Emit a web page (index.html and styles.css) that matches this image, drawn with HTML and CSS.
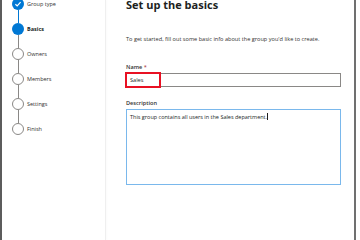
FILE: index.html
```html
<!DOCTYPE html>
<html>
<head>
<meta charset="utf-8">
<link rel="stylesheet" href="styles.css">
</head>
<body>
<div class="frame">
  <aside class="sidebar">
    <div class="steps">
      <div class="step">
        <span class="dot done"><svg width="12" height="12" viewBox="0 0 12 12"><circle cx="6" cy="6" r="6" fill="#0078d4"/><path d="M3.4 6.2 L5.2 7.9 L8.6 4.2" fill="none" stroke="#fff" stroke-width="1.2"/></svg></span>
        <span class="label">Group type</span>
      </div>
      <div class="conn blue"></div>
      <div class="step">
        <span class="dot current"></span>
        <span class="label bold">Basics</span>
      </div>
      <div class="conn"></div>
      <div class="step">
        <span class="dot"></span>
        <span class="label">Owners</span>
      </div>
      <div class="conn"></div>
      <div class="step">
        <span class="dot"></span>
        <span class="label">Members</span>
      </div>
      <div class="conn"></div>
      <div class="step">
        <span class="dot"></span>
        <span class="label">Settings</span>
      </div>
      <div class="conn"></div>
      <div class="step">
        <span class="dot"></span>
        <span class="label">Finish</span>
      </div>
    </div>
  </aside>
  <main class="content">
    <h1 class="title">Set up the basics</h1>
    <p class="intro">To get started, fill out some basic info about the group you'd like to create.</p>
    <div class="field">
      <div class="flabel">Name <span class="req">*</span></div>
      <div class="input-wrap">
        <div class="input">Sales</div>
        <div class="highlight"></div>
      </div>
    </div>
    <div class="field">
      <div class="flabel">Description</div>
      <div class="textarea">This group contains all users in the Sales department.<span class="caret"></span></div>
    </div>
  </main>
</div>
</body>
</html>
```
FILE: styles.css
```css
html, body {
  margin: 0;
  padding: 0;
  background: #fff;
  width: 360px;
  height: 240px;
  overflow: hidden;
}
body {
  font-family: "Open Sans", "Noto Sans", sans-serif;
  color: #323130;
}
.frame {
  display: flex;
  height: 240px;
  border-left: 2px solid #5c5c5c;
  border-right: 2px solid #707070;
  width: 352px;
  box-sizing: content-box;
}
.sidebar {
  width: 103px;
  flex: none;
  border-right: 1px solid #efefef;
  box-shadow: 1px 0 2px rgba(0,0,0,0.02);
}
.steps {
  display: flex;
  flex-direction: column;
  margin-top: -2px;
  padding-left: 10px;
}
.step {
  display: flex;
  align-items: center;
  height: 12px;
}
.dot {
  width: 12px;
  height: 12px;
  box-sizing: border-box;
  border-radius: 50%;
  border: 1px solid #8a8886;
  background: #fff;
  flex: none;
  display: block;
}
.dot.done {
  border: none;
  background: none;
}
.dot.done svg { display: block; }
.dot.current {
  border: none;
  background: #0078d4;
}
.label {
  margin-left: 3px;
  font-size: 5.5px;
  color: #323130;
  white-space: nowrap;
}
.label.bold {
  font-weight: 700;
  color: #201f1e;
}
.conn {
  width: 1px;
  height: 13px;
  margin-left: 5.5px;
  background: #8a8886;
}
.conn.blue {
  background: #0078d4;
}
.content {
  flex: 1;
  padding-left: 20px;
  padding-right: 13px;
}
.title {
  margin: 0;
  font-size: 11px;
  font-weight: 700;
  line-height: 10px;
  color: #201f1e;
}
.intro {
  margin: 25px 0 0 0;
  font-size: 5.6px;
  line-height: 8px;
  color: #323130;
}
.field {
  margin-top: 20px;
}
.field + .field {
  margin-top: 12px;
}
.flabel {
  font-size: 5.6px;
  font-weight: 600;
  line-height: 8px;
  color: #323130;
}
.req { color: #a4262c; font-weight: 400; }
.input-wrap {
  position: relative;
  margin-top: 2px;
}
.input {
  height: 14px;
  box-sizing: border-box;
  border: 1px solid #8a8886;
  font-size: 5.6px;
  line-height: 12px;
  padding-left: 3px;
  color: #201f1e;
}
.highlight {
  position: absolute;
  left: -1px;
  top: -1px;
  width: 36px;
  height: 16px;
  box-sizing: border-box;
  border: 2px solid #e81123;
}
.textarea {
  margin-top: 2px;
  height: 76px;
  box-sizing: border-box;
  border: 1px solid #7ab8ec;
  font-size: 5.5px;
  line-height: 8px;
  padding: 3px 3px;
  color: #201f1e;
}
.caret {
  display: inline-block;
  width: 1px;
  height: 7px;
  background: #201f1e;
  vertical-align: -1px;
}
```
